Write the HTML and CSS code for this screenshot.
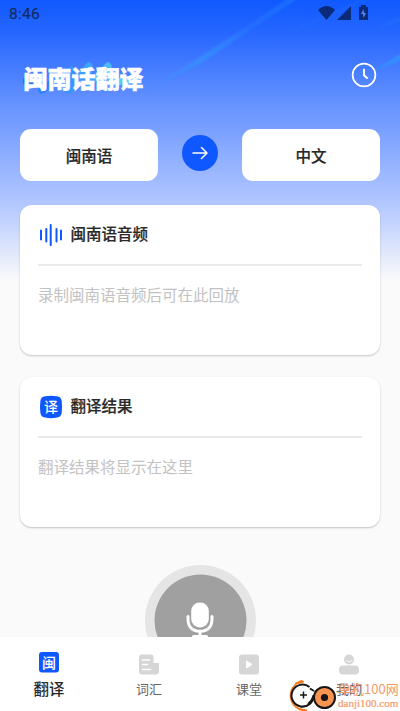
FILE: index.html
```html
<!DOCTYPE html>
<html lang="zh-CN">
<head>
<meta charset="utf-8">
<title>闽南话翻译</title>
<link rel="stylesheet" href="styles.css">
</head>
<body>
<div class="app">
  <svg class="rays" viewBox="0 0 400 140" aria-hidden="true">
    <defs>
      <linearGradient id="ray" x1="0" y1="1" x2="1" y2="0">
        <stop offset="0" stop-color="#38a0ff" stop-opacity="0"/>
        <stop offset=".4" stop-color="#30a0ff" stop-opacity=".5"/>
        <stop offset=".7" stop-color="#30a0ff" stop-opacity=".15"/>
        <stop offset="1" stop-color="#30a0ff" stop-opacity=".3"/>
      </linearGradient>
    </defs>
    <path class="soft" d="M136 96L200 64L300-3L290-3L200 57Z" fill="url(#ray)"/>
    <path class="soft" d="M370 73L402 60V53Z" fill="#309cff" opacity=".6"/>
    <path class="soft" d="M250 50L375-3H365Z" fill="#2680ff" opacity=".2"/>
    <path class="soft" d="M375 30L400 21V17Z" fill="#2688ff" opacity=".3"/>
  </svg>
  <header class="status">
    <span class="time">8:46</span>
    <svg class="status-icons" width="52" height="16" viewBox="0 0 52 16" fill="#0b2a78">
      <path d="M0 5Q8.500-3 17 5L8.500 15Z"/>
      <path d="M19 15L33 1V15Z"/>
      <path d="M41 2H43V0H48V2H50V15H41Z"/>
      <path d="M45.500 4L43 9H45L45.500 13L48 8H46Z" fill="#4f86ff"/>
    </svg>
  </header>
  <div class="heading">
    <div class="brand">
      <svg class="brush" width="122" height="36" viewBox="0 0 122 36" fill="none" stroke-linecap="round" stroke-linejoin="round" stroke-width="7">
        <defs><linearGradient id="brushFill"><stop stop-color="#146cff"/><stop offset=".5" stop-color="#36a4ff"/><stop offset="1" stop-color="#62e4f5"/></linearGradient></defs>
        <path d="M3 20L9 21M19 29L48 9L46 29L66 5L64 25L85 5L88 22L112 18" stroke="url(#brushFill)"/>
      </svg>
      <h1>闽南话翻译</h1>
    </div>
    <svg class="history" width="26" height="26" viewBox="0 0 26 26" fill="none" stroke="#fff" stroke-linecap="round" stroke-linejoin="round">
      <circle cx="13" cy="13" r="11.400" stroke-width="1.700"/>
      <path d="M13 7.500V13.200L16 16" stroke-width="1.900"/>
    </svg>
  </div>
  <main>
    <div class="languages">
      <div class="language">闽南语</div>
      <div class="swap">
        <svg width="16" height="14" viewBox="0 0 16 14" fill="none" stroke="#fff" stroke-width="1.500" stroke-linecap="round" stroke-linejoin="round"><path d="M1 7H15M9.500 1.500L15 7L9.500 12.500"/></svg>
      </div>
      <div class="language">中文</div>
    </div>
    <section class="card">
      <div class="card-title">
        <svg width="24" height="24" viewBox="0 0 24 24" stroke="#0f57ff" stroke-width="2" stroke-linecap="round"><path d="M2 7.500V16.500M7.300 6V18.500M11.700 2V22M17.500 6V18.500M22 7.500V16.500"/></svg>
        <h2>闽南语音频</h2>
      </div>
      <p>录制闽南语音频后可在此回放</p>
    </section>
    <section class="card">
      <div class="card-title">
        <svg width="24" height="24" viewBox="0 0 24 24"><path d="M6 1.200Q12 .5 18 1.200Q22 1.500 22.700 6Q23.400 12 22.700 18Q22 22 18 22.500Q12 23.800 6 22.500Q2 22 1.400 18Q.5 12 1.400 6Q2 1.500 6 1.200Z" fill="#0f57ff"/><text class="glyph" x="12" y="17" font-size="14">译</text></svg>
        <h2>翻译结果</h2>
      </div>
      <p>翻译结果将显示在这里</p>
    </section>
    <div class="record">
      <svg width="111" height="111" viewBox="0 0 111 111">
        <circle cx="55.500" cy="55.500" r="55.500" fill="#e5e5e5"/>
        <circle cx="55.500" cy="55.500" r="46" fill="#a0a0a0"/>
        <rect x="46.200" y="37.500" width="17.600" height="25" rx="8.500" fill="#fff"/>
        <path d="M43 51.500V54C43 62 47.500 66.300 55 66.300S67 62 67 54V51.500M55 67V71.500M48.500 71.500H61.500" stroke="#fff" stroke-width="3" fill="none" stroke-linecap="round"/>
      </svg>
    </div>
  </main>
  <nav class="tabs">
    <div class="tab active">
      <svg width="22" height="22" viewBox="0 0 22 22"><rect x="1" y="1" width="20" height="20.500" rx="3" fill="#0f57ff"/><text class="glyph" x="11" y="16.500" font-size="14">闽</text></svg>
      <span>翻译</span>
    </div>
    <div class="tab">
      <svg width="22" height="22" viewBox="0 0 22 22"><path d="M3.500 1.500H13Q15.500 1.500 15.500 4V10H21V18Q21 21.500 17.500 21.500H4Q1 21.500 1 18.500V4Q1 1.500 3.500 1.500Z" fill="#d6d6d6"/><path d="M4.500 7H11.500M4.500 11.500H9.500M4.500 16.500H12.500" stroke="#fff" stroke-width="1.600" stroke-linecap="round"/></svg>
      <span>词汇</span>
    </div>
    <div class="tab">
      <svg width="22" height="22" viewBox="0 0 22 22"><rect x="1" y="1.500" width="20" height="20" rx="3" fill="#d6d6d6"/><path d="M8.500 8V15L14 11.500Z" fill="#fff" stroke="#fff" stroke-linejoin="round"/></svg>
      <span>课堂</span>
    </div>
    <div class="tab">
      <svg width="22" height="22" viewBox="0 0 22 22"><circle cx="11" cy="6.500" r="5" fill="#d6d6d6"/><path d="M8.500 7.500Q11 10.500 13.500 7.500" fill="none" stroke="#fff" stroke-linecap="round"/><rect x="1" y="12.500" width="20" height="9" rx="4" fill="#d6d6d6"/></svg>
      <span>我的</span>
    </div>
  </nav>
  <div class="watermark">
    <svg width="50" height="34" viewBox="0 0 50 34" fill="none">
      <path d="M15 3C8 3 2.500 9 2.500 16.500C2.500 24 8 30.500 16 31" stroke="#f47a20" stroke-width="1.600"/>
      <path d="M7 4.500L13 1.500L16 2.500L13 4ZM10 29.500L17 33L19 31Z" fill="#f47a20" stroke="#f47a20"/>
      <path d="M21.500 8.100A11 11 0 1 0 25.500 16" stroke="#191515" stroke-width="2"/>
      <path d="M20 25Q24 22 25.500 17M22 9.500L26 12M27 13L31 10" stroke="#191515" stroke-width="2"/>
      <path d="M12 16H19M15.500 12.500V19.500" stroke="#191515" stroke-width="1.500"/>
      <circle cx="36.500" cy="18.500" r="10.500" fill="#f99550" stroke="#191515" stroke-width="2"/>
      <circle cx="36.500" cy="18.500" r="3.600" fill="#191515"/>
    </svg>
    <div class="mark-text"><span class="mark-name">单机100网</span><span class="mark-url">danji100.com</span></div>
  </div>
</div>
</body>
</html>
```
FILE: styles.css
```css
* { box-sizing: border-box; }
body {
  margin: 0;
  font-family: "Noto Sans CJK SC", sans-serif;
  color: #292929;
}
h1, h2, p { margin: 0; }
svg { display: block; flex: none; }
.app {
  position: relative;
  display: flex;
  flex-direction: column;
  width: 400px;
  height: 711px;
  overflow: hidden;
  background: linear-gradient(#1059ff 0, #2465ff 30px, #6c97ff 112px, #b4c8ff 205px, #fafafa 280px);
}
.rays { position: absolute; top: 0; left: 0; width: 400px; height: 140px; }
.soft { filter: blur(1px); }
.status {
  position: relative;
  display: flex;
  align-items: center;
  justify-content: space-between;
  height: 28px;
  padding: 0 29px 0 9px;
}
.time {
  font: 400 15.5px/20px Roboto, sans-serif;
  letter-spacing: .3px;
  color: #142b64;
  -webkit-text-stroke: .2px #142b64;
}
.status-icons { margin: -2px 1px 0 0; }
.heading {
  position: relative;
  display: flex;
  justify-content: space-between;
  height: 101px;
  padding: 35px 23px 0 23.5px;
}
.brand { position: relative; height: 32px; }
.brush { position: absolute; left: -1px; top: -2px; opacity: .85; }
h1 {
  position: relative;
  margin-top: -1px;
  font-size: 24px;
  line-height: 32px;
  font-weight: 900;
  color: #fff;
  -webkit-text-stroke: .5px #fff;
}
.history { margin-top: -1px; }
main {
  position: relative;
  flex: 1;
  min-height: 0;
  overflow: hidden;
  padding: 0 20px;
}
.languages { display: flex; align-items: center; justify-content: space-between; height: 52px; margin-bottom: 24px; }
.language {
  width: 138px;
  height: 52px;
  border-radius: 11px;
  background: #fff;
  text-align: center;
  font-size: 15.5px;
  line-height: 53px;
  font-weight: 500;
  -webkit-text-stroke: .2px #292929;
}
.swap {
  display: grid;
  place-items: center;
  width: 36px;
  height: 36px;
  margin-bottom: 4px;
  border-radius: 50%;
  background: #0f57ff;
}
.card {
  height: 149.5px;
  margin-bottom: 22.5px;
  padding: 0 18px;
  border-radius: 12px;
  background: #fff;
  box-shadow: 0 1px 2px rgba(0, 0, 0, .22);
}
.card-title {
  display: flex;
  align-items: center;
  gap: 7.5px;
  height: 61px;
  padding-left: 1px;
  border-bottom: 2px solid #e9e9e9;
}
h2 { font-size: 15.5px; line-height: 24px; font-weight: 500; -webkit-text-stroke: .2px #292929; }
.card-title h2 { margin-bottom: 3px; }
.card p { margin-top: 16px; font-size: 15.5px; line-height: 24px; color: #c2c2c2; }
.glyph { fill: #fff; text-anchor: middle; font-weight: 500; }
.record { display: flex; justify-content: center; padding-top: 16px; }
.tabs {
  position: relative;
  display: grid;
  grid-template-columns: repeat(4, 100px);
  height: 74px;
  background: #fff;
}
.tab {
  display: flex;
  flex-direction: column;
  align-items: center;
  padding: 16px 2px 0 0;
  font-size: 13px;
  line-height: 20px;
  color: #666;
}
.tab span { margin-top: 4px; }
.tab.active { font-size: 15.5px; font-weight: 500; color: #292929; }
.tab.active svg { margin-top: -2px; }
.tab.active span { margin-top: 5px; }
.watermark {
  position: absolute;
  left: 288px;
  top: 679px;
  display: flex;
}
.mark-text { display: flex; flex-direction: column; color: #f39a68; white-space: nowrap; }
.mark-name { font-size: 13px; line-height: 19px; }
.mark-url { font: 11px/10px "Liberation Serif", serif; -webkit-text-stroke: .2px #f39a68; }
```
